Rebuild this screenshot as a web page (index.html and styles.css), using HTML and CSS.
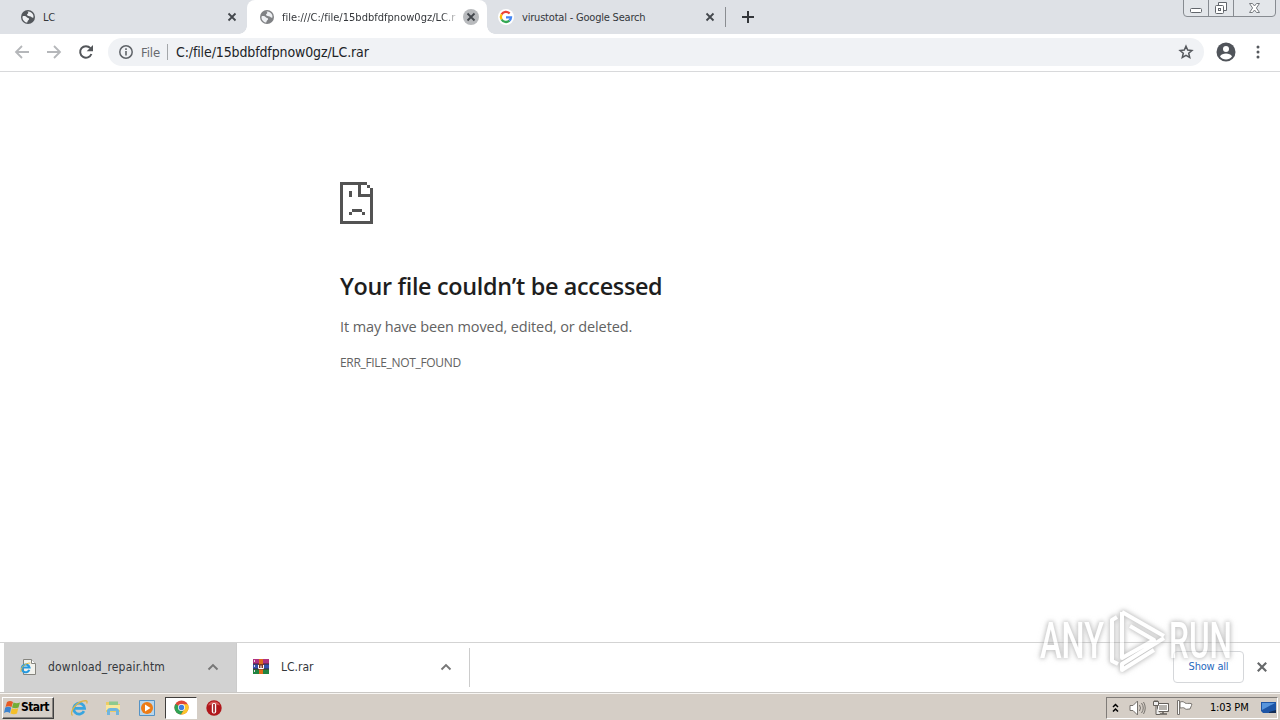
FILE: index.html
```html
<!DOCTYPE html>
<html lang="en">
<head>
<meta charset="utf-8">
<title>LC.rar</title>
<link rel="stylesheet" href="styles.css">
</head>
<body>
<svg class="defs" width="0" height="0">
  <symbol id="globe" viewBox="0 0 16 16"><circle cx="8" cy="8" r="7" fill="currentColor"/><path d="M2.500 7.500C4 6.600 6 7.200 6.800 8.300c.6.900 2.200.5 2.300 1.600.1 1-1.100 1.200-1.400 2.100l-.5 1.600C4.300 13.300 2.200 10.600 2.500 7.500zM7.500 2.500c2.600-.3 4.700 1.100 5.600 3.200.5 1.300.4 2.300.2 3-1.200.3-1.900-.6-2.700-1.100-1.200-.6-2.900-.3-3.500-1.500-.4-1 .9-1.300 1.200-2 .2-.6-.5-1-.8-1.600z" fill="#eef0f3"/></symbol>
  <symbol id="cross" viewBox="0 0 10 10"><path d="M1.500 1.500l7 7m0-7l-7 7" stroke="currentColor" stroke-width="1.800" fill="none"/></symbol>
  <symbol id="chevron" viewBox="0 0 12 8"><path d="M1.500 6.500L6 2l4.500 4.500" stroke="#777" stroke-width="1.900" fill="none"/></symbol>
</svg>
<div class="screen">
  <header class="tabs">
    <div class="tab tab-first"><svg class="fav dark"><use href="#globe"/></svg><span class="title">LC</span><svg class="close"><use href="#cross"/></svg></div>
    <div class="tab tab-active"><svg class="fav grey"><use href="#globe"/></svg><span class="title fade">file:///C:/file/15bdbfdfpnow0gz/LC.r</span><span class="round"><svg class="close"><use href="#cross"/></svg></span></div>
    <div class="tab tab-last"><svg class="fav" viewBox="0 0 16 16"><circle cx="8" cy="8" r="8" fill="#fff"/><g fill="none" stroke-width="2.300"><path d="M3.600 5.400A5 5 0 0 1 11.600 4.500" stroke="#ea4335"/><path d="M3.600 10.500A5 5 0 0 1 3.600 5.400" stroke="#fbbc05"/><path d="M11.400 11.600A5 5 0 0 1 3.600 10.500" stroke="#34a853"/><path d="M8 8.300h5A5 5 0 0 1 11.300 11.700" stroke="#4285f4"/></g></svg><span class="title">virustotal - Google Search</span><svg class="close"><use href="#cross"/></svg></div>
    <i class="tab-sep"></i>
    <svg class="plus" viewBox="0 0 12 12"><path d="M6 0v12M0 6h12" stroke="#33363a" stroke-width="2"/></svg>
    <svg class="winctl" width="94" height="18" viewBox="0 0 94 18"><path d="M.5 0v13q0 3.500 3.500 3.500h85q3.500 0 3.500-3.500V0M25.500 0v16M50.500 0v16" fill="#e3e6ea" stroke="#878b91"/><rect x="7.500" y="8.500" width="11" height="4" rx="1" fill="#fff" stroke="#62666c"/><path d="M35.500 5V2.500h8v8H41" fill="#fff" stroke="#62666c"/><rect x="32.500" y="5.500" width="8" height="8" rx="1" fill="#fff" stroke="#62666c"/><rect x="35.500" y="8.500" width="2" height="2" fill="none" stroke="#62666c"/><path d="M66.500 3.500h3l2 2.500 2-2.500h3L73.400 8l3.100 4.500h-3l-2-2.500-2 2.500h-3L69.600 8z" fill="#fff" stroke="#777b80"/></svg>
  </header>
  <nav class="toolbar">
    <svg class="nav-ic" viewBox="0 0 16 16"><path d="M15 8H2M8 2L2 8l6 6" fill="none" stroke="#b5b7ba" stroke-width="1.800"/></svg>
    <svg class="nav-ic" viewBox="0 0 16 16"><path d="M1 8h13M8 2l6 6-6 6" fill="none" stroke="#b5b7ba" stroke-width="1.800"/></svg>
    <svg class="nav-ic" viewBox="0 0 16 16"><path d="M13.400 10A5.800 5.800 0 1 1 12.400 4.200" fill="none" stroke="#53565a" stroke-width="2"/><path d="M15 1v6.300H8.700z" fill="#53565a"/></svg>
    <div class="omnibox">
      <svg class="info" viewBox="0 0 14 14"><circle cx="7" cy="7" r="6.200" fill="none" stroke="#5f6368" stroke-width="1.500"/><path d="M7 6v4.500M7 3.300v1.600" stroke="#5f6368" stroke-width="1.600"/></svg>
      <span class="scheme">File</span><i class="bar"></i><span class="url">C:/file/15bdbfdfpnow0gz/LC.rar</span>
      <svg class="star" viewBox="0 0 16 16"><path d="M8 2.200l1.700 3.900 4.200.4-3.200 2.800 1 4.100L8 11.300l-3.700 2.100 1-4.100-3.200-2.800 4.200-.4z" fill="none" stroke="#55585d" stroke-width="1.500"/></svg>
    </div>
    <svg class="avatar" viewBox="0 0 20 20"><circle cx="10" cy="10" r="9.500" fill="#50545a"/><circle cx="10" cy="7" r="3" fill="#fff"/><path d="M4 14.500c1-2.300 3.500-3 6-3s5 .7 6 3a7.500 7.500 0 0 1-12 0z" fill="#fff"/></svg>
    <svg class="dots" viewBox="0 0 4 14"><g fill="#55585d"><circle cx="2" cy="2" r="1.500"/><circle cx="2" cy="7" r="1.500"/><circle cx="2" cy="12" r="1.500"/></g></svg>
  </nav>
  <main class="page">
    <svg class="sad" width="33" height="42" viewBox="0 0 33 42" shape-rendering="crispEdges" fill="#535353"><path d="M0 0h27v3H3v36h27V15H18V3h3v9h9V6h3v36H0zM27 3h3v3h-3zM9 9h3v6H9zM12 27h10v3H12zM9 30h3v3H9zM22 30h3v3h-3z"/></svg>
    <h1>Your file couldn’t be accessed</h1>
    <p class="msg">It may have been moved, edited, or deleted.</p>
    <p class="code">ERR_FILE_NOT_FOUND</p>
  </main>
  <section class="shelf">
    <div class="item pressed"><svg class="file-ic" viewBox="0 0 16 16"><path d="M3.500.5h8l4 4v11h-12z" fill="#f2f2ed" stroke="#85847e"/><path d="M11.500.5v4h4" fill="#fff" stroke="#85847e"/><path d="M9.300 10.900A3.900 3.900 0 1 1 9.500 8.500H3" fill="none" stroke="#269adf" stroke-width="2.100"/><path d="M1 13C0 9 5 4 10.300 4" fill="none" stroke="#e6bc3d" stroke-width="1"/></svg><span>download_repair.htm</span><svg class="chev"><use href="#chevron"/></svg></div>
    <div class="item"><svg class="file-ic" viewBox="0 0 16 16"><path d="M0 0h16v5H0z" fill="#b13280"/><path d="M0 5h16v5H0z" fill="#3454af"/><path d="M0 10h16v5H0z" fill="#208441"/><path d="M0 4.500h16v1H0zM0 9.500h16v1H0z" fill="#3b2535"/><path d="M6 0h4v15H6z" fill="#e16b1b"/><path d="M5 5h6v5.500H5z" fill="#7e3a28"/><path d="M5.500 6v3.500h5V6M8 6.500v3" fill="none" stroke="#fff"/><path d="M1.500 1v2M1.500 6v2M1.500 11v2" stroke="#e9d8e2"/></svg><span>LC.rar</span><svg class="chev"><use href="#chevron"/></svg></div>
    <button class="show">Show all</button>
    <svg class="shelf-close"><use href="#cross"/></svg>
  </section>
  <footer class="taskbar">
    <div class="start"><svg width="17" height="16" viewBox="0 0 17 16"><path d="M3 2q3-2 6 0L7.500 7Q4.500 5.500 1.500 7z" fill="#e75a24"/><path d="M9.500 2.500q3 1.500 6.500 0L14.500 7.500q-3 1.500-6.500 0z" fill="#72ae35"/><path d="M1.200 7.600q3-1.500 6 0L6 13q-3-2-6 0z" fill="#3c83cf"/><path d="M7.800 8.200q3 1.500 6.400 0L13 13.500q-3 1.500-6.500 0z" fill="#f4bf2a"/></svg><b>Start</b></div>
    <svg class="q q-ie" viewBox="0 0 18 18"><path d="M14 12.200A5.500 5.500 0 1 1 14.600 9.300H4.500" fill="none" stroke="#38a5df" stroke-width="2.700"/><path d="M2.500 16.500C-1 13 7 1 16.500 1.800q1 .5.200 2.700" fill="none" stroke="#dcb446" stroke-width="1.300"/></svg>
    <svg class="q" viewBox="0 0 18 18"><path d="M2 3h5l1 2h8v8H2z" fill="#eccb65"/><path d="M5 2.500h9v4H5z" fill="#8ec98d"/><path d="M2 6h14v5H2z" fill="#fae79b"/><path d="M3 16v-5q1-2 3-2h6q2 0 3 2v5h-3v-4H6v4z" fill="#70b5de"/></svg>
    <svg class="q" viewBox="0 0 18 18"><path d="M1.500 1.500h15v15h-15z" fill="#b8d6ec" stroke="#5593c5"/><circle cx="9" cy="9" r="6" fill="#ed7c16"/><path d="M7 5.500l5.500 3.500L7 12.500z" fill="#fff"/></svg>
    <div class="running"><svg width="15" height="15" viewBox="0 0 16 16"><circle cx="8" cy="8" r="7.500" fill="#df4737"/><path d="M1.500 4.200A7.500 7.500 0 0 0 7.500 15.500L10.600 10 8 8z" fill="#2fa254"/><path d="M8 4.500h6.700A7.500 7.500 0 0 1 7.500 15.500L11 10z" fill="#fbc52b"/><circle cx="8" cy="8" r="3.700" fill="#fff"/><circle cx="8" cy="8" r="2.900" fill="#3e7de0"/></svg></div>
    <svg class="q" viewBox="0 0 18 18"><circle cx="9" cy="9" r="7.700" fill="#b0171b"/><path d="M3 6.500a6.500 6.500 0 0 1 12 0q-6-2-12 0z" fill="#d65855"/><rect x="6.800" y="4" width="4.400" height="10.500" rx="2" fill="#fff"/><rect x="8.200" y="5" width="1.600" height="8.500" fill="#981114"/></svg>
    <div class="tray">
      <svg width="7" height="10" viewBox="0 0 7 10"><path d="M1 4l2.500-2.500L6 4M1 8.500L3.500 6 6 8.500" fill="none" stroke="#000" stroke-width="1.500"/></svg>
      <svg class="t-vol" width="17" height="16" viewBox="0 0 17 16"><path d="M1 5.500h3L8.500 1v14L4 10.500H1z" fill="#fff" stroke="#77736e"/><path d="M10.500 5q2 3 0 6M12.500 3q3.500 5 0 10M14.500 2q3.500 6 0 12" fill="none" stroke="#77736e"/></svg>
      <svg class="t-net" width="16" height="16" viewBox="0 0 16 16"><path d="M4.500 3.500h11v8h-11z" fill="#b5b2ad" stroke="#64605b"/><path d="M5.500 4.500h9v6h-9z" fill="none" stroke="#fff"/><path d="M7 14h7M10 12v2" stroke="#64605b" stroke-width="1.500"/><path d="M.5 1.500h5v4h-5zM3 6v8.500h4" fill="#eee" stroke="#64605b"/><path d="M2 0v2M4 0v2" stroke="#64605b"/></svg>
      <svg class="t-flag" width="16" height="15" viewBox="0 0 16 15"><path d="M3 2c3-1 4 0 5 1 2 1 3 0 6 .5q1.500 0 .5 2L13 9c-3 0-4 1-5-.5C6 7 5 8 3 8z" fill="#fff" stroke="#77736e"/><path d="M.5.500h2v14h-2z" fill="#fff" stroke="#77736e"/></svg>
      <time>1:03 PM</time>
      <svg class="t-desk" width="16" height="14" viewBox="0 0 16 14"><path d="M0 1h15v11H2L0 10z" fill="#1d55a5"/><path d="M1 2h13L1 9z" fill="#5795dc"/><path d="M8 11l7-2v3H8z" fill="#132d56"/></svg>
    </div>
  </footer>
  <svg class="mark" width="210" height="72" viewBox="0 0 210 72"><text x="10" y="54" textLength="64" lengthAdjust="spacingAndGlyphs">ANY</text><text x="139" y="54" textLength="63" lengthAdjust="spacingAndGlyphs">RUN</text><path d="M87 13l-5 3v41l6 3M92 8l42 24M92 8v46l32-18-24-14M134 34L92 60v6l32-20"/></svg>
</div>
</body>
</html>
```

FILE: styles.css
```css
* { box-sizing: border-box; }
body { margin: 0; background: #fff; }
svg { display: block; flex: none; }
.defs { position: absolute; }
.screen { position: relative; width: 1280px; height: 720px; overflow: hidden; display: flex; flex-direction: column; font-family: "DejaVu Sans Condensed", "DejaVu Sans", sans-serif; font-stretch: condensed; font-size: 11px; color: #34373b; }
.tabs { height: 34px; flex: none; display: flex; background: #dee1e6; }
.tab { display: flex; align-items: center; height: 34px; padding-left: 20px; }
.tab-first { width: 247px; padding-right: 10px; border-radius: 0 0 8px; }
.tab-active { width: 240px; padding: 0 8px 0 12px; background: #fff; border-radius: 8px 8px 0 0; position: relative; }
.tab-active::before, .tab-active::after { content: ""; position: absolute; bottom: 0; width: 8px; height: 8px; }
.tab-active::before { left: -8px; background: radial-gradient(circle at 0 0, #dee1e6 7.5px, #fff 8px); }
.tab-active::after { right: -8px; background: radial-gradient(circle at 100% 0, #dee1e6 7.5px, #fff 8px); }
.tab-last { width: 238px; padding: 0 10px 0 11px; }
.fav { width: 16px; height: 16px; }
.dark { color: #53575c; }
.grey { color: #808285; }
.title { flex: 1; margin-left: 7px; white-space: nowrap; overflow: hidden; letter-spacing: -.2px; }
.tab-last .title { margin-left: 8px; }
.title.fade { flex: none; width: 175px; letter-spacing: .02px; -webkit-mask-image: linear-gradient(90deg, #000 91%, rgba(0,0,0,.2)); mask-image: linear-gradient(90deg, #000 91%, rgba(0,0,0,.2)); }
.close { width: 10px; height: 10px; color: #43474c; }
.round { width: 16px; height: 16px; margin-left: 6px; border-radius: 50%; background: #b8babd; display: grid; place-items: center; }
.tab-sep { width: 1px; height: 20px; margin-top: 7px; background: #8a8d91; }
.plus { width: 12px; height: 12px; margin: 11px 0 0 16px; }
.winctl { margin: 0 3px 0 auto; }
.toolbar { height: 38px; flex: none; display: flex; align-items: center; padding: 0 20px 1px 14px; border-bottom: 1px solid #d8d9db; }
.nav-ic { width: 16px; height: 16px; margin-right: 16px; }
.nav-ic:nth-child(3) { margin-right: 14px; }
.omnibox { width: 1096px; height: 28px; border-radius: 14px; background: #f0f2f5; display: flex; align-items: center; padding: 0 10px 0 11px; font-size: 14px; }
.info { width: 14px; height: 14px; }
.scheme { margin-left: 8px; width: 26px; font-size: 13px; letter-spacing: -.1px; color: #66696e; }
.bar { width: 1px; height: 16px; background: #a4a7aa; }
.url { margin-left: 8px; letter-spacing: -.12px; color: #202327; }
.star { width: 16px; height: 16px; margin-left: auto; }
.avatar { width: 20px; height: 20px; margin-left: 12px; }
.dots { width: 4px; height: 14px; margin-left: auto; }
.page { flex: 1; padding: 110px 0 0 340px; font-family: "Open Sans", "Noto Sans", sans-serif; font-stretch: normal; color: #626262; }
h1 { margin: 46px 0 0; font-size: 23.4px; line-height: 32px; font-weight: 600; letter-spacing: -.32px; color: #1e1e1e; white-space: nowrap; }
.msg { margin: 15px 0 0; font-size: 14.5px; line-height: 20px; letter-spacing: -.11px; }
.code { margin: 17px 0 0; font-size: 12px; line-height: 18px; letter-spacing: -.33px; }
.shelf { height: 51px; flex: none; display: flex; align-items: center; padding: 0 12px 0 4px; border-top: 1px solid #d3d3d3; border-bottom: 1px solid #cac8c5; }
.item { width: 233px; height: 39px; display: flex; align-items: center; padding: 0 17px 2px 16px; border-right: 1px solid #ccc; font-size: 12px; }
.item span { letter-spacing: .2px; }
.item:nth-child(2) span { letter-spacing: 0; }
.item.pressed { height: 49px; background: #d2d2d2; padding-bottom: 1px; }
.file-ic { width: 16px; height: 16px; margin-right: 12px; }
.chev { width: 12px; height: 8px; margin-left: auto; }
.show { margin: -2px 0 0 auto; width: 71px; height: 32px; border: 1px solid #d5d7da; border-radius: 4px; background: #fff; color: #2769bd; font: inherit; font-stretch: condensed; padding: 0; letter-spacing: -.2px; }
.shelf-close { width: 12px; height: 12px; margin: -2px 0 0 12px; color: #66686a; }
.taskbar { height: 27px; flex: none; display: flex; align-items: center; background: #d5cec6; border-top: 1px solid #f8f6f3; padding: 1px 2px 0; }
.start { width: 52px; height: 22px; display: flex; align-items: center; padding-left: 1px; border: 1px solid; border-color: #fff #404040 #404040 #fff; box-shadow: inset -1px -1px #888480; color: #000; margin-right: 16px; font-size: 12px; }
.start b { letter-spacing: -.6px; margin-top: -1px; }
.q { width: 18px; height: 18px; margin-right: 16px; }
.q:nth-of-type(3) { margin-right: 9px; }
.running { width: 32px; height: 22px; display: grid; place-items: center; background: #fff; border: 1px solid; border-color: #403e3c #fff #fff #403e3c; margin-right: 8px; }
.tray { margin-left: auto; width: 172px; height: 22px; display: flex; align-items: center; padding-left: 5px; border: 1px solid; border-color: #807c78 #fff #fff #807c78; color: #000; }
.t-vol { margin-left: 10px; }
.t-net { margin-left: 7px; }
.t-flag { margin-left: 8px; }
.tray time { margin-left: 17px; width: 50px; letter-spacing: -.2px; white-space: nowrap; }
.t-desk { margin-left: 1px; }
.mark { position: absolute; left: 1030px; top: 604px; overflow: visible; font: 500 50px "Roboto", sans-serif; font-stretch: normal; opacity: .6; filter: drop-shadow(0 0 2px #999) drop-shadow(0 0 2.5px #bbb); }
.mark text { fill: #fff; }
.mark path { fill: none; stroke: #fff; stroke-width: 4; stroke-linejoin: round; }
```
